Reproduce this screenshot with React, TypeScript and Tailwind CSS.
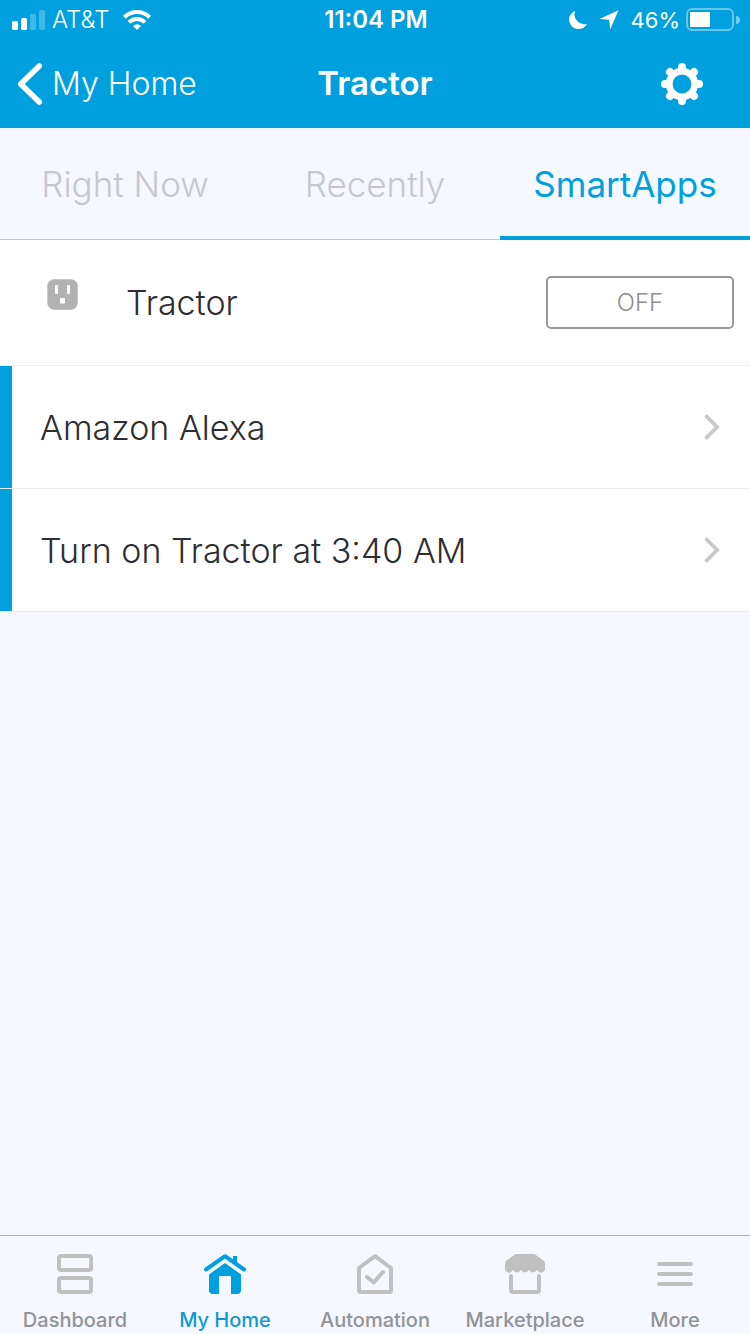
import { useState } from "react";
import type { ReactNode } from "react";

function SignalIcon() {
  return (
    <svg width="34" height="20" viewBox="0 0 34 20" fill="white" aria-hidden="true">
      <rect x="0" y="11" width="6" height="9" rx="1.5" />
      <rect x="9" y="8" width="6" height="12" rx="1.5" />
      <rect x="18" y="4" width="6" height="16" rx="1.5" opacity="0.25" />
      <rect x="27" y="0" width="6" height="20" rx="1.5" opacity="0.25" />
    </svg>
  );
}

function WifiIcon() {
  return (
    <svg width="28" height="20" viewBox="0 0 28 20" fill="none" stroke="white" strokeWidth="4" aria-hidden="true">
      <path d="M1.4 7.3a17.8 17.8 0 0 1 25.2 0" />
      <path d="M6 12.3a11.3 11.3 0 0 1 16 0" />
      <path d="M14 20l-4-4.1a5.7 5.7 0 0 1 8 0z" fill="white" stroke="none" />
    </svg>
  );
}

function MoonIcon() {
  return (
    <svg width="18" height="18" viewBox="0 0 18 18" fill="white" aria-hidden="true">
      <path d="M6.2 0A9.6 9.6 0 0 0 18 12.700A9.700 9.700 0 0 1 9.300 18A9.300 9.300 0 0 1 0 9A9.700 9.700 0 0 1 6.2 0z" />
    </svg>
  );
}

function LocationIcon() {
  return (
    <svg width="20" height="20" viewBox="0 0 20 20" fill="white" aria-hidden="true">
      <path d="M19.5 0.3L11.2 19.6L10.2 9.8L0.4 8.9z" />
    </svg>
  );
}

function BatteryIcon() {
  return (
    <svg width="54" height="24" viewBox="0 0 54 24" aria-hidden="true">
      <rect x="1" y="1" width="46" height="21" rx="5" fill="none" stroke="white" strokeWidth="2" opacity="0.4" />
      <rect x="4" y="4" width="20" height="15" rx="1" fill="white" />
      <path d="M50 8a4 4 0 0 1 0 8z" fill="white" opacity="0.45" />
    </svg>
  );
}

function GearIcon() {
  const angles = [0, 45, 90, 135, 180, 225, 270, 315];
  return (
    <svg width="44" height="44" viewBox="-22 -22 44 44" fill="none" stroke="white" aria-hidden="true">
      <circle r="12.8" strokeWidth="6.8" />
      {angles.map((a) => (
        <path key={a} d="M0 -14V-17" strokeWidth="8" strokeLinecap="round" transform={`rotate(${a})`} />
      ))}
    </svg>
  );
}

function OutletIcon() {
  return (
    <svg width="31" height="31" viewBox="0 0 31 31" aria-hidden="true">
      <rect x="0.3" y="0.3" width="30.4" height="30.4" rx="7" fill="#b2b2b2" />
      <rect x="8" y="6" width="3" height="9" rx="1" fill="white" />
      <rect x="20" y="6" width="3" height="9" rx="1" fill="white" />
      <path d="M13 19h5v4.500a1 1 0 0 1-1 1h-3a1 1 0 0 1-1-1z" fill="white" />
    </svg>
  );
}

function ChevronRight() {
  return (
    <svg width="16" height="26" viewBox="0 0 16 26" fill="none" stroke="#c7c7cc" strokeWidth="3.6" aria-hidden="true">
      <path d="M1.500 1.400L13.200 13L1.500 24.600" />
    </svg>
  );
}

function DashboardIcon() {
  return (
    <svg width="40" height="40" viewBox="0 0 40 40" fill="none" stroke="#c0c0c0" strokeWidth="4" aria-hidden="true">
      <rect x="4" y="2" width="32" height="14" rx="2" />
      <rect x="4" y="24" width="32" height="14" rx="2" />
    </svg>
  );
}

function HomeIcon() {
  return (
    <svg width="42" height="40" viewBox="0 0 42 40" fill="#009fdd" aria-hidden="true">
      <path d="M2 15.500L21 2.200L40 15.500" fill="none" stroke="#009fdd" strokeWidth="4" strokeLinejoin="round" strokeLinecap="round" />
      <path d="M29 2h4v7l-4-2.800z" />
      <path d="M21 9L37 20.500V36a4 4 0 0 1-4 4h-6V23a1 1 0 0 0-1-1H16a1 1 0 0 0-1 1v17H9a4 4 0 0 1-4-4V20.500z" />
    </svg>
  );
}

function AutomationIcon() {
  return (
    <svg width="40" height="40" viewBox="0 0 40 40" fill="none" stroke="#c0c0c0" strokeWidth="4" strokeLinecap="round" strokeLinejoin="round" aria-hidden="true">
      <path d="M20 2.200L36 14V36.500a1.500 1.500 0 0 1-1.500 1.500H5.500A1.500 1.500 0 0 1 4 36.500V14z" />
      <path d="M12 23L18.800 28.500L28 18" />
    </svg>
  );
}

function MarketplaceIcon() {
  return (
    <svg width="40" height="40" viewBox="0 0 40 40" aria-hidden="true">
      <path d="M10.500 0H29.500L38.500 6.500Q40 7.600 40 9.500V14A4 4 0 0 1 32.300 16Q32 15.500 31.700 16A4 4 0 0 1 24.300 16Q24 15.500 23.700 16A4 4 0 0 1 16.300 16Q16 15.500 15.700 16A4 4 0 0 1 8.300 16Q8 15.500 7.700 16A4 4 0 0 1 0 14V9.500Q0 7.600 1.500 6.500z" fill="#c0c0c0" />
      <path d="M6 22V36a2 2 0 0 0 2 2H32a2 2 0 0 0 2-2V22" fill="none" stroke="#c0c0c0" strokeWidth="4" strokeLinecap="round" />
    </svg>
  );
}

function MoreIcon() {
  return (
    <svg width="40" height="40" viewBox="0 0 40 40" stroke="#c0c0c0" strokeWidth="4" strokeLinecap="round" aria-hidden="true">
      <path d="M4 10H36M4 20H36M4 30H36" />
    </svg>
  );
}

const tabs = ["Right Now", "Recently", "SmartApps"];
const smartApps = ["Amazon Alexa", "Turn on Tractor at 3:40 AM"];
const destinations: { label: string; icon: ReactNode }[] = [
  { label: "Dashboard", icon: <DashboardIcon /> },
  { label: "My Home", icon: <HomeIcon /> },
  { label: "Automation", icon: <AutomationIcon /> },
  { label: "Marketplace", icon: <MarketplaceIcon /> },
  { label: "More", icon: <MoreIcon /> },
];

export default function App() {
  const [tab, setTab] = useState("SmartApps");
  const [on, setOn] = useState(false);

  return (
    <div className="flex min-h-screen flex-col bg-[#f5f8ff] font-['Inter','Liberation_Sans',sans-serif] text-[#2d2d32]">
      <header className="bg-[#009fdd] text-white">
        <div className="grid h-10 grid-cols-[1fr_auto_1fr] items-center pr-2.5 pl-3 text-[22px]">
          <div className="flex items-center">
            <SignalIcon />
            <span className="mr-3.5 ml-1.5 text-2xl font-light">AT&amp;T</span>
            <WifiIcon />
          </div>
          <span className="text-2xl font-semibold">11:04 PM</span>
          <div className="flex items-center justify-end">
            <MoonIcon />
            <span className="mx-3">
              <LocationIcon />
            </span>
            <span className="mr-1.5">46%</span>
            <BatteryIcon />
          </div>
        </div>
        <nav className="grid h-22 grid-cols-[1fr_auto_1fr] items-center px-4">
          <a href="#my-home" className="flex items-center gap-2 text-[32px] font-light">
            <svg width="28" height="44" viewBox="0 0 28 44" fill="none" stroke="white" strokeWidth="5.600" strokeLinecap="round" strokeLinejoin="round" aria-hidden="true">
              <path d="M23.200 4L4.800 22L23.200 40" />
            </svg>
            My Home
          </a>
          <h1 className="text-[33px] font-semibold">Tractor</h1>
          <button type="button" aria-label="Settings" className="mr-7.5 justify-self-end">
            <GearIcon />
          </button>
        </nav>
      </header>

      <div role="tablist" className="grid h-28 grid-cols-3 border-b border-[#c8c8cd] text-[35px]">
        {tabs.map((name) => (
          <button
            key={name}
            type="button"
            role="tab"
            aria-selected={tab === name}
            onClick={() => setTab(name)}
            className={
              tab === name
                ? "-mb-px border-b-4 border-[#009fdd] pt-1 text-[#009fdd]"
                : "-mb-px border-b border-[#c8c8cd] pt-px font-light text-[#c7c7cc]"
            }
          >
            {name}
          </button>
        ))}
      </div>

      <main className="flex-1">
        <section className="flex h-[126px] items-center border-b border-[#ebebeb] bg-white pr-4 pl-[47px]">
          <span className="mb-4">
            <OutletIcon />
          </span>
          <h2 className="ml-12 flex-1 text-[34px] font-light">Tractor</h2>
          <button
            type="button"
            aria-pressed={on}
            onClick={() => setOn(!on)}
            className="h-[53px] w-47 rounded-[5px] border-2 border-[#999999] text-2xl font-light text-[#8e8e8e]"
          >
            {on ? "ON" : "OFF"}
          </button>
        </section>
        <ul>
          {smartApps.map((app) => (
            <li key={app} className="border-b border-[#e6ebec] bg-white">
              <a href="#smartapp" className="flex h-[122px] items-center justify-between border-l-12 border-[#009fdd] pr-7.5 pl-7 text-[34px] font-light">
                {app}
                <ChevronRight />
              </a>
            </li>
          ))}
        </ul>
      </main>

      <nav className="grid h-[99px] grid-cols-5 border-t border-[#a7aabb]">
        {destinations.map(({ label, icon }) => (
          <a
            key={label}
            href="#section"
            className={
              label === "My Home"
                ? "flex flex-col items-center gap-3 pt-4.5 text-xl leading-7 font-medium text-[#1199d6]"
                : "flex flex-col items-center gap-3 pt-4.5 text-xl leading-7 font-medium text-[#929297]"
            }
          >
            {icon}
            {label}
          </a>
        ))}
      </nav>
    </div>
  );
}
